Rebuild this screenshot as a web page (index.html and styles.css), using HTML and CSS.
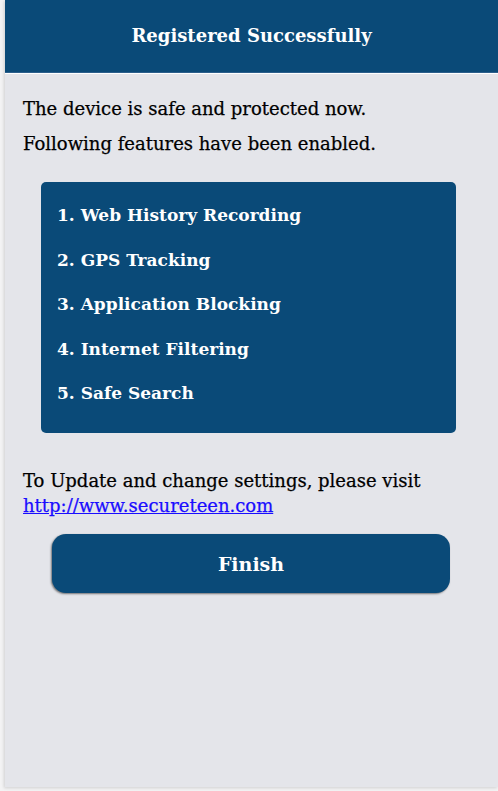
FILE: index.html
```html
<!DOCTYPE html>
<html lang="en">
<head>
  <meta charset="UTF-8">
  <meta name="viewport" content="width=device-width, initial-scale=1.0">
  <title>Registered Successfully</title>
  <link rel="stylesheet" href="styles.css">
</head>
<body>
  <div class="page">
    <!-- Thanh tiêu đề -->
    <div class="header">Registered Successfully</div>

    <div class="content">
      <p class="intro">The device is safe and protected now.<br>Following features have been enabled.</p>

      <ul class="features">
        <li>1. Web History Recording</li>
        <li>2. GPS Tracking</li>
        <li>3. Application Blocking</li>
        <li>4. Internet Filtering</li>
        <li>5. Safe Search</li>
      </ul>

      <p class="visit">To Update and change settings, please visit<br><a href="http://www.secureteen.com">http://www.secureteen.com</a></p>

      <button class="finish-button">Finish</button>
    </div>
  </div>
</body>
</html>
```

FILE: styles.css
```css
/* Reset chung */
* {
  margin: 0;
  padding: 0;
  box-sizing: border-box;
}
body {
  font-family: 'DejaVu Serif', serif;
  background: #f3f3f4;
  height: 791px;
  overflow: hidden;
  padding: 0 0 4px 5px;
}
.page {
  height: 100%;
  background: #e4e5ea;
  box-shadow: -1px 1px 3px rgba(0,0,0,0.15);
  display: flex;
  flex-direction: column;
}
/* Tiêu đề */
.header {
  height: 73px;
  background: #0a4a78;
  border-bottom: 1px solid #2c5f8c;
  box-shadow: 0 1px 0 #fff;
  color: #fff;
  font-size: 18px;
  font-weight: bold;
  display: flex;
  justify-content: center;
  align-items: center;
  padding-bottom: 1px;
}
.content {
  padding: 18px 0 0 18px;
  display: flex;
  flex-direction: column;
}
.intro {
  font-size: 18px;
  line-height: 35px;
  color: #000;
  -webkit-text-stroke: 0.25px #000;
}
/* Danh sách tính năng */
.features {
  list-style: none;
  margin: 21px 0 0 18px;
  width: 415px;
  height: 251px;
  background: #0a4a78;
  border-radius: 5px;
  padding: 11px 16px;
}
.features li {
  color: #fff;
  font-size: 17px;
  font-weight: bold;
  line-height: 44.5px;
}
.visit {
  margin-top: 35px;
  font-size: 18px;
  line-height: 25px;
  color: #000;
  -webkit-text-stroke: 0.25px #000;
}
.visit a {
  color: #1a0dff;
  -webkit-text-stroke: 0.25px #1a0dff;
}
.finish-button {
  margin: 16px 0 0 29px;
  width: 398px;
  height: 59px;
  background: #0a4a78;
  color: #fff;
  border: none;
  border-radius: 14px;
  box-shadow: -1px 1px 2px rgba(0,0,0,0.5);
  font-family: 'DejaVu Serif', serif;
  font-size: 19px;
  font-weight: bold;
}
```
